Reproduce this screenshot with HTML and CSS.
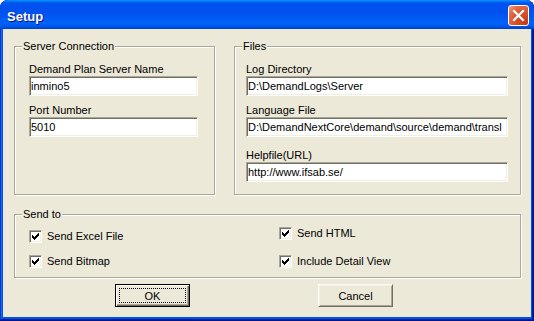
FILE: index.html
```html
<!DOCTYPE html>
<html lang="en">
<head>
    <meta charset="UTF-8">
    <title>Setup</title>
    <link rel="stylesheet" href="styles.css">
</head>
<body>
    <div class="window">
        <div class="titlebar">
            <span class="title">Setup</span>
            <button class="close-btn" aria-label="Close">
                <svg width="19" height="19" viewBox="0 0 19 19">
                    <path d="M5 5L14 14M14 5L5 14" stroke="#fff" stroke-width="2.2" stroke-linecap="square" fill="none"/>
                </svg>
            </button>
        </div>

        <div class="client">
            <div class="top-row">
                <div class="group group-server">
                    <span class="legend">Server Connection</span>
                    <div class="group-body">
                        <label class="field">
                            <span class="field-label">Demand Plan Server Name</span>
                            <input class="text-input" type="text" value="inmino5">
                        </label>
                        <label class="field">
                            <span class="field-label">Port Number</span>
                            <input class="text-input" type="text" value="5010">
                        </label>
                    </div>
                </div>

                <div class="group group-files">
                    <span class="legend">Files</span>
                    <div class="group-body">
                        <label class="field">
                            <span class="field-label">Log Directory</span>
                            <input class="text-input" type="text" value="D:\DemandLogs\Server">
                        </label>
                        <label class="field">
                            <span class="field-label">Language File</span>
                            <input class="text-input" type="text" value="D:\DemandNextCore\demand\source\demand\transl">
                        </label>
                        <label class="field field-wide-gap">
                            <span class="field-label">Helpfile(URL)</span>
                            <input class="text-input" type="text" value="http://www.ifsab.se/">
                        </label>
                    </div>
                </div>
            </div>

            <div class="group group-send">
                <span class="legend">Send to</span>
                <div class="send-grid">
                    <div class="check-col check-col-left">
                        <label class="check"><span class="check-box"><svg width="11" height="11" viewBox="1 1 11 11"><path d="M9 3h1v1h-1zM8 4h2v1h-2zM3 5h1v1h-1zM7 5h3v1h-3zM3 6h2v1h-2zM6 6h3v1h-3zM3 7h5v1h-5zM4 8h3v1h-3zM5 9h1v1h-1z" fill="#000"/></svg></span>Send Excel File</label>
                        <label class="check"><span class="check-box"><svg width="11" height="11" viewBox="1 1 11 11"><path d="M9 3h1v1h-1zM8 4h2v1h-2zM3 5h1v1h-1zM7 5h3v1h-3zM3 6h2v1h-2zM6 6h3v1h-3zM3 7h5v1h-5zM4 8h3v1h-3zM5 9h1v1h-1z" fill="#000"/></svg></span>Send Bitmap</label>
                    </div>
                    <div class="check-col check-col-right">
                        <label class="check"><span class="check-box"><svg width="11" height="11" viewBox="1 1 11 11"><path d="M9 3h1v1h-1zM8 4h2v1h-2zM3 5h1v1h-1zM7 5h3v1h-3zM3 6h2v1h-2zM6 6h3v1h-3zM3 7h5v1h-5zM4 8h3v1h-3zM5 9h1v1h-1z" fill="#000"/></svg></span>Send HTML</label>
                        <label class="check"><span class="check-box"><svg width="11" height="11" viewBox="1 1 11 11"><path d="M9 3h1v1h-1zM8 4h2v1h-2zM3 5h1v1h-1zM7 5h3v1h-3zM3 6h2v1h-2zM6 6h3v1h-3zM3 7h5v1h-5zM4 8h3v1h-3zM5 9h1v1h-1z" fill="#000"/></svg></span>Include Detail View</label>
                    </div>
                </div>
            </div>

            <div class="button-row">
                <button class="btn btn-default"><span class="btn-focus">OK</span></button>
                <button class="btn"><span class="btn-focus">Cancel</span></button>
            </div>
        </div>
    </div>
</body>
</html>
```

FILE: styles.css
```css
* {
    box-sizing: border-box;
    margin: 0;
    padding: 0;
}

body {
    background-color: #fff;
    font-family: 'Liberation Sans', Arial, sans-serif;
    font-size: 11px;
    color: #000;
}

.window {
    width: 534px;
    height: 321px;
    display: flex;
    flex-direction: column;
    background-color: #0054e3;
    border-radius: 8px 8px 0 0;
    overflow: hidden;
    box-shadow: inset -1px -1px #00138c, inset 1px 1px #0831d9, inset -2px -2px #001ea0, inset 2px 2px #166aee;
}

.titlebar {
    height: 29px;
    flex-shrink: 0;
    display: flex;
    justify-content: space-between;
    align-items: flex-start;
    padding: 5px 5px 0 7px;
    border-radius: 8px 8px 0 0;
    background: linear-gradient(180deg, #0997ff 0, #0053ee 10%, #0050ee 40%, #0062f7 80%, #0058ee 90%, #0045d4 97%, #003dd7 100%);
}

.title {
    margin-top: 4px;
    font-family: 'Liberation Sans', Arial, sans-serif;
    font-weight: bold;
    font-size: 13px;
    line-height: 16px;
    color: #fff;
    text-shadow: 1px 1px #0f1089;
}

.close-btn {
    width: 21px;
    height: 21px;
    border: 1px solid #fff;
    border-radius: 3px;
    background: radial-gradient(circle at 90% 90%, #c23c17 0, #d9502a 45%, #e26b48 75%, #f0a58e 100%);
    display: flex;
    align-items: center;
    justify-content: center;
}

.client {
    flex: 1;
    margin: 0 3px 4px 3px;
    padding: 17px 10px 10px 11px;
    background-color: #ece9d8;
    display: flex;
    flex-direction: column;
}

.top-row {
    display: flex;
    gap: 19px;
}

.group {
    position: relative;
    border: 1px solid #aca899;
    box-shadow: inset 1px 1px #fff, 1px 1px #fff;
}

.legend {
    position: absolute;
    top: -7px;
    left: 7px;
    padding: 0 1px;
    line-height: 13px;
    background-color: #ece9d8;
}

.group-server {
    width: 201px;
    height: 149px;
}

.group-files {
    width: 287px;
    height: 149px;
}

.group-body {
    display: flex;
    flex-direction: column;
    gap: 8px;
    padding-top: 16px;
}

.group-server .group-body {
    padding-left: 14px;
}

.group-files .group-body {
    padding-left: 11px;
}

.field {
    display: flex;
    flex-direction: column;
}

.field-wide-gap {
    margin-top: 4px;
}

.field-label {
    line-height: 13px;
}

.text-input {
    display: block;
    height: 20px;
    padding: 0 1px;
    border: 1px solid;
    border-color: #aca899 #fff #fff #aca899;
    box-shadow: inset 1px 1px #716f64, inset -1px -1px #f1efe2;
    background-color: #fff;
    font-family: 'Liberation Sans', Arial, sans-serif;
    font-size: 11px;
    color: #000;
    outline: none;
}

.group-server .text-input {
    width: 169px;
}

.group-files .text-input {
    width: 262px;
}

.group-send {
    margin-top: 19px;
    height: 64px;
}

.send-grid {
    display: grid;
    grid-template-columns: 250px 1fr;
    padding-left: 14px;
}

.check-col {
    display: flex;
    flex-direction: column;
}

.check-col-left {
    padding-top: 15px;
    gap: 12px;
}

.check-col-right {
    padding-top: 12px;
    gap: 15px;
}

.check {
    display: flex;
    align-items: flex-start;
    gap: 5px;
    line-height: 13px;
}

.check-box {
    width: 13px;
    height: 13px;
    flex-shrink: 0;
    border: 1px solid;
    border-color: #aca899 #fff #fff #aca899;
    box-shadow: inset 1px 1px #716f64, inset -1px -1px #f1efe2;
    background-color: #fff;
}

.check-box svg {
    display: block;
    shape-rendering: crispEdges;
}

.button-row {
    display: flex;
    gap: 128px;
    margin-top: 6px;
    padding-left: 101px;
}

.btn {
    width: 75px;
    height: 23px;
    display: flex;
    padding: 3px;
    background-color: #ece9d8;
    border: 1px solid;
    border-color: #fff #716f64 #716f64 #fff;
    box-shadow: inset 1px 1px #f1efe2, inset -1px -1px #aca899;
    font-family: 'Liberation Sans', Arial, sans-serif;
    font-size: 11px;
    color: #000;
}

.btn-default {
    border-color: #000;
    box-shadow: inset 1px 1px #fff, inset -1px -1px #716f64, inset -2px -2px #aca899;
}

.btn-focus {
    flex: 1;
    display: flex;
    align-items: center;
    justify-content: center;
    border: 1px dotted transparent;
}

.btn-default .btn-focus {
    border-color: #000;
}
```
